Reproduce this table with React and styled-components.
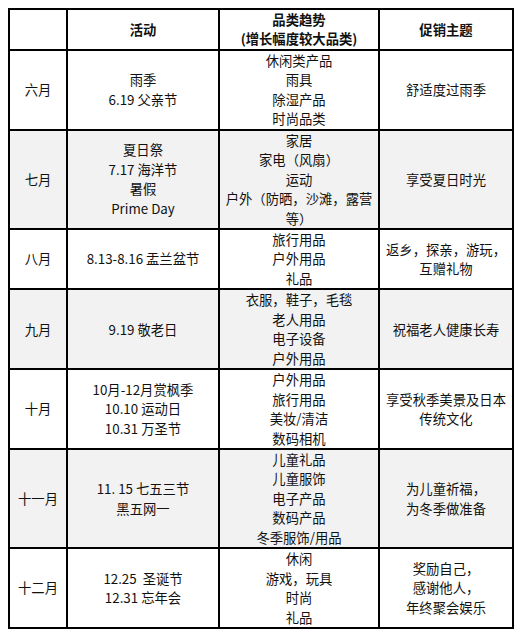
import React from 'react';
import styled, {createGlobalStyle} from 'styled-components';

const GlobalStyle = createGlobalStyle`
  body {
    margin: 8px;
    background: #fff;
    font-family: "Noto Sans CJK SC", "Noto Sans", sans-serif;
    color: #111;
  }
`;

const Table = styled.table`
  border-collapse: collapse;
  width: 504px;
  table-layout: fixed;
  font-size: 13.33px;
  line-height: 19.45px;
`;

const Row = styled.tr`
  background: ${props => props.shaded ? '#f1f2f1' : '#fff'};
`;

const Cell = styled.td`
  border: 2px solid #000;
  padding: 0 4px;
  text-align: center;
  vertical-align: middle;
  white-space: pre;
`;

const HeadCell = styled(Cell).attrs({as: 'th'})`
  font-weight: 700;
`;

const rows = [
  {month: '六月', events: ['雨季', '6.19 父亲节'], goods: ['休闲类产品', '雨具', '除湿产品', '时尚品类'], theme: ['舒适度过雨季']},
  {month: '七月', events: ['夏日祭', '7.17 海洋节', '暑假', 'Prime Day'], goods: ['家居', '家电（风扇）', '运动', '户外（防晒，沙滩，露营', '等）'], theme: ['享受夏日时光']},
  {month: '八月', events: ['8.13-8.16 盂兰盆节'], goods: ['旅行用品', '户外用品', '礼品'], theme: ['返乡，探亲，游玩，', '互赠礼物']},
  {month: '九月', events: ['9.19 敬老日'], goods: ['衣服，鞋子，毛毯', '老人用品', '电子设备', '户外用品'], theme: ['祝福老人健康长寿']},
  {month: '十月', events: ['10月-12月赏枫季', '10.10 运动日', '10.31 万圣节'], goods: ['户外用品', '旅行用品', '美妆/清洁', '数码相机'], theme: ['享受秋季美景及日本', '传统文化']},
  {month: '十一月', events: ['11. 15 七五三节', '黑五网一'], goods: ['儿童礼品', '儿童服饰', '电子产品', '数码产品', '冬季服饰/用品'], theme: ['为儿童祈福，', '为冬季做准备']},
  {month: '十二月', events: ['12.25  圣诞节', '12.31 忘年会'], goods: ['休闲', '游戏，玩具', '时尚', '礼品'], theme: ['奖励自己，', '感谢他人，', '年终聚会娱乐']},
];

function Lines({items}) {
  return items.map((t, i) => <div key={i}>{t}</div>);
}

export default function App() {
  return (
    <>
      <GlobalStyle/>
      <Table>
        <colgroup>
          <col style={{width: 58}}/>
          <col style={{width: 152}}/>
          <col style={{width: 160}}/>
          <col style={{width: 134}}/>
        </colgroup>
        <thead>
          <Row>
            <HeadCell/>
            <HeadCell>活动</HeadCell>
            <HeadCell><Lines items={['品类趋势', '(增长幅度较大品类)']}/></HeadCell>
            <HeadCell>促销主题</HeadCell>
          </Row>
        </thead>
        <tbody>
          {rows.map((r, i) => (
            <Row key={r.month} shaded={i % 2 === 1}>
              <Cell>{r.month}</Cell>
              <Cell><Lines items={r.events}/></Cell>
              <Cell><Lines items={r.goods}/></Cell>
              <Cell><Lines items={r.theme}/></Cell>
            </Row>
          ))}
        </tbody>
      </Table>
    </>
  );
}
